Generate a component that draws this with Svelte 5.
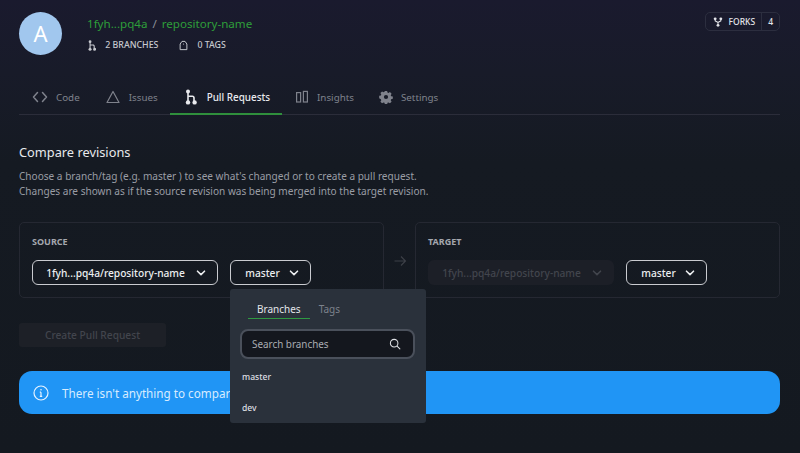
<script>
    const tabs = [
        { name: "Code", icon: "code" },
        { name: "Issues", icon: "issues" },
        { name: "Pull Requests", icon: "pr", active: true },
        { name: "Insights", icon: "insights" },
        { name: "Settings", icon: "settings" },
    ];
</script>

{#snippet chevron()}
    <svg class="chevron" viewBox="0 0 12 12" width="12" height="12"><path d="M2.5 4.2 6 7.6l3.5-3.4" fill="none" stroke="currentColor" stroke-width="1.6" stroke-linecap="round" stroke-linejoin="round" /></svg>
{/snippet}

{#snippet branchIcon(size)}
    <svg viewBox="0 0 12 16" width={size * 0.75} height={size} fill="currentColor">
        <circle cx="3" cy="2.4" r="2" />
        <circle cx="3" cy="13.4" r="2.2" />
        <circle cx="9.6" cy="13.4" r="2.2" />
        <path d="M2.2 3h1.6v9H2.2zM3 6.4h4.4c1.5 0 2.4 1 2.4 2.4V12H8.2V9c0-.7-.4-1.1-1-1.1H3z" />
    </svg>
{/snippet}

{#snippet tabIcon(icon)}
    {#if icon === "code"}
        <svg viewBox="0 0 16 16" width="16" height="16" fill="none" stroke="currentColor" stroke-width="1.5" stroke-linecap="round" stroke-linejoin="round"><path d="M5.5 3.5 1.5 8l4 4.5M10.5 3.5l4 4.5-4 4.5" /></svg>
    {:else if icon === "issues"}
        <svg viewBox="0 0 16 16" width="16" height="16" fill="none" stroke="currentColor" stroke-width="1.2" stroke-linejoin="round"><path d="M8 2.5 14 13.5H2Z" /></svg>
    {:else if icon === "pr"}
        <span class="pr-icon">{@render branchIcon(16)}</span>
    {:else if icon === "insights"}
        <svg viewBox="0 0 14 14" width="14" height="14" fill="none" stroke="currentColor" stroke-width="1.2"><rect x="1.6" y="2.6" width="4" height="9.4" /><rect x="8.4" y="1.4" width="4" height="10.6" /></svg>
    {:else}
        <svg viewBox="0 0 16 16" width="14" height="14"><path fill="currentColor" fill-rule="evenodd" d="M6.7 1h2.6l.4 1.9 1.2.5 1.6-1 1.9 1.9-1 1.6.5 1.2 1.9.4v2.6l-1.9.4-.5 1.2 1 1.6-1.9 1.9-1.6-1-1.2.5-.4 1.9H6.7l-.4-1.9-1.2-.5-1.6 1-1.9-1.9 1-1.6-.5-1.2L.2 9.3V6.7l1.9-.4.5-1.2-1-1.6 1.9-1.9 1.6 1 1.2-.5ZM8 5.6a2.4 2.4 0 1 0 0 4.8 2.4 2.4 0 0 0 0-4.8Z" /></svg>
    {/if}
{/snippet}

<div class="page">
    <header class="repo-header">
        <div class="avatar">A</div>
        <div class="repo-info">
            <div class="repo-title">
                <span class="green">1fyh...pq4a</span>
                <span class="slash">/</span>
                <span class="green">repository-name</span>
            </div>
            <div class="repo-stats">
                <span class="stat">
                    {@render branchIcon(11)}
                    2 BRANCHES
                </span>
                <span class="stat">
                    <svg viewBox="0 0 12 14" width="9" height="11" fill="none" stroke="currentColor" stroke-width="1.3" stroke-linejoin="round"><path d="M1.5 5 4 1.5h4L10.5 5v7.5h-9Z" /><circle cx="6" cy="5" r=".8" fill="currentColor" stroke="none" /></svg>
                    0 TAGS
                </span>
            </div>
        </div>
        <div class="forks">
            <span class="forks-label">
                <svg viewBox="0 0 12 12" width="10" height="10" fill="currentColor"><circle cx="2.6" cy="2.2" r="1.7" /><circle cx="9.4" cy="2.2" r="1.7" /><circle cx="6" cy="10" r="1.7" /><path d="M2 3h1.2v1.2L6 5.8l2.8-1.6V3H10v2L6.6 7v2H5.4V7L2 5Z" /></svg>
                FORKS
            </span>
            <span class="forks-count">4</span>
        </div>
    </header>

    <nav class="tabs">
        {#each tabs as tab}
            <div class="tab" class:active={tab.active}>
                {@render tabIcon(tab.icon)}
                <span>{tab.name}</span>
            </div>
        {/each}
    </nav>

    <section class="compare">
        <h2>Compare revisions</h2>
        <p>Choose a branch/tag (e.g. master ) to see what's changed or to create a pull request.<br />Changes are shown as if the source revision was being merged into the target revision.</p>

        <div class="revisions">
            <div class="rev-card">
                <div class="rev-label">SOURCE</div>
                <div class="rev-row">
                    <button class="select repo-select">1fyh...pq4a/repository-name {@render chevron()}</button>
                    <div class="branch-wrap">
                        <button class="select branch-select">master {@render chevron()}</button>
                        <div class="dropdown">
                            <div class="dd-tabs">
                                <span class="dd-tab active">Branches</span>
                                <span class="dd-tab">Tags</span>
                            </div>
                            <div class="search">
                                <span>Search branches</span>
                                <svg viewBox="0 0 14 14" width="12" height="12" fill="none" stroke="currentColor" stroke-width="1.2" stroke-linecap="round"><circle cx="6" cy="6" r="4.4" /><path d="m9.4 9.4 3.3 3.3" /></svg>
                            </div>
                            <div class="dd-item">master</div>
                            <div class="dd-item">dev</div>
                        </div>
                    </div>
                </div>
            </div>
            <div class="arrow">
                <svg viewBox="0 0 14 14" width="14" height="14" fill="none" stroke="currentColor" stroke-width="1.1"><path d="M1.5 7h11M8 2.5 12.5 7 8 11.5" /></svg>
            </div>
            <div class="rev-card">
                <div class="rev-label">TARGET</div>
                <div class="rev-row">
                    <button class="select repo-select disabled">1fyh...pq4a/repository-name {@render chevron()}</button>
                    <button class="select branch-select">master {@render chevron()}</button>
                </div>
            </div>
        </div>

        <button class="create">Create Pull Request</button>

        <div class="notice">
            <svg viewBox="0 0 16 16" width="16" height="16" fill="none" stroke="currentColor" stroke-width="1.2"><circle cx="8" cy="8" r="7" /><path d="M8 7.2v4M6.8 11.4h2.4M6.8 7.2H8" /><circle cx="8" cy="4.8" r=".8" fill="currentColor" stroke="none" /></svg>
            <span>There isn't anything to compare.</span>
        </div>
    </section>
</div>

<style>
    :global(body) {
        margin: 0;
        background: #141920;
    }

    .page {
        width: 800px;
        height: 453px;
        overflow: hidden;
        box-sizing: border-box;
        padding: 12px 20px 0 19px;
        font-family: "Noto Sans", sans-serif;
        color: #f2f3f5;
        background: linear-gradient(180deg, #1a1a2e 0%, #181b29 16%, #151a22 36%, #141920 100%);
    }

    .repo-header {
        display: flex;
        align-items: flex-start;
        height: 55px;
    }

    .avatar {
        width: 43px;
        height: 43px;
        border-radius: 50%;
        background: #a1c7ee;
        color: #fff;
        font-size: 22px;
        line-height: 43px;
        text-align: center;
    }

    .repo-info {
        margin-left: 25px;
        flex: 1;
    }

    .repo-title {
        display: flex;
        gap: 5px;
        font-size: 11.6px;
        line-height: 16px;
        margin-top: 4px;
    }

    .green {
        color: #2e9e3a;
    }

    .slash {
        color: #8b8e98;
    }

    .repo-stats {
        display: flex;
        gap: 21px;
        margin-top: 7px;
        padding-left: 1px;
        font-size: 8.8px;
        font-weight: 500;
        line-height: 12px;
        color: #c6c8ce;
    }

    .stat {
        display: flex;
        align-items: center;
        gap: 9px;
    }

    .forks {
        display: flex;
        align-items: stretch;
        height: 19px;
        box-sizing: border-box;
        border: 1px solid #2c2e3f;
        border-radius: 5px;
        font-size: 8.5px;
        font-weight: 500;
        color: #e4e5ea;
    }

    .forks-label {
        display: flex;
        align-items: center;
        gap: 6px;
        padding: 0 6px 0 7px;
        border-right: 1px solid #2c2e3f;
    }

    .forks-count {
        display: flex;
        align-items: center;
        padding: 0 6px;
    }

    .tabs {
        display: flex;
        height: 32px;
        margin-top: 15px;
        border-bottom: 1px solid #2b2d3a;
    }

    .tab {
        display: flex;
        align-items: center;
        gap: 8px;
        padding: 0 12px 1px 13px;
        margin-bottom: -1px;
        font-size: 9.8px;
        color: #7f828c;
        border-bottom: 2px solid transparent;
    }

    .tab svg {
        flex: none;
    }

    .pr-icon {
        display: flex;
        justify-content: center;
        width: 16px;
    }

    .tab.active {
        color: #e9eaee;
        font-size: 9.9px;
        font-weight: 500;
        border-bottom-color: #2f8f3c;
    }

    .compare {
        padding-top: 28px;
    }

    h2 {
        margin: 0;
        font-size: 12.8px;
        font-weight: 400;
        line-height: 18px;
        color: #e8e9ec;
    }

    p {
        margin: 8px 0 0;
        font-size: 10.07px;
        line-height: 15px;
        color: #9a9da5;
    }

    .revisions {
        display: flex;
        align-items: stretch;
        margin-top: 23px;
    }

    .rev-card {
        flex: 1;
        height: 76px;
        box-sizing: border-box;
        padding: 13px 12px 0;
        border: 1px solid #252832;
        border-radius: 5px;
    }

    .rev-label {
        font-size: 9px;
        font-weight: 700;
        line-height: 12px;
        color: #a4a7ae;
    }

    .rev-row {
        display: flex;
        gap: 12px;
        margin-top: 12px;
    }

    .arrow {
        flex: none;
        width: 31px;
        display: flex;
        align-items: center;
        justify-content: center;
        padding-top: 2px;
        color: #3d4048;
    }

    .select {
        display: flex;
        align-items: center;
        justify-content: center;
        gap: 10px;
        height: 25px;
        box-sizing: border-box;
        padding: 0 0 0 3px;
        background: transparent;
        border: 1px solid #c9cbd0;
        border-radius: 6px;
        font: 500 10.2px "Noto Sans", sans-serif;
        color: #eceef0;
    }

    .repo-select {
        width: 186px;
    }

    .branch-select {
        width: 81px;
        padding-left: 4px;
        gap: 8px;
    }

    .select.disabled {
        border-color: transparent;
        background: #1c1f27;
        color: #42454d;
    }

    .branch-wrap {
        position: relative;
    }

    .dropdown {
        position: absolute;
        z-index: 2;
        top: 29px;
        left: 0;
        width: 196px;
        height: 134px;
        box-sizing: border-box;
        padding: 11px 11px 0 10px;
        background: #2a313b;
        border-radius: 3px;
    }

    .dd-tabs {
        display: flex;
        padding-left: 8px;
    }

    .dd-tab {
        font-size: 10px;
        line-height: 18px;
        color: #7d828c;
        padding: 0 9px;
    }

    .dd-tab.active {
        color: #e4e6ea;
        border-bottom: 1.5px solid #2f9a42;
    }

    .search {
        display: flex;
        align-items: center;
        justify-content: space-between;
        height: 30px;
        box-sizing: border-box;
        margin-top: 9.5px;
        padding: 0 12px 0 10px;
        background: #14171e;
        border: 2px solid #4a505b;
        border-radius: 8px;
        font-size: 9.9px;
        color: #a9acb3;
    }

    .search svg {
        color: #dfe1e5;
    }

    .dd-item {
        margin-left: 2px;
        font-size: 8.6px;
        font-weight: 500;
        line-height: 31px;
        color: #dcdee2;
    }

    .search + .dd-item {
        margin-top: 3.5px;
    }

    .create {
        display: block;
        width: 147px;
        height: 24px;
        margin-top: 25px;
        padding: 0;
        background: #1d2027;
        border: none;
        border-radius: 3px;
        font: 500 10.2px "Noto Sans", sans-serif;
        color: #42454d;
    }

    .notice {
        display: flex;
        align-items: center;
        gap: 13px;
        height: 43px;
        margin-top: 24px;
        padding-left: 14px;
        background: #2095f5;
        border-radius: 13px;
        font-size: 11.7px;
        color: #d7ecff;
    }

    .notice svg {
        color: #e7f3ff;
    }
</style>
